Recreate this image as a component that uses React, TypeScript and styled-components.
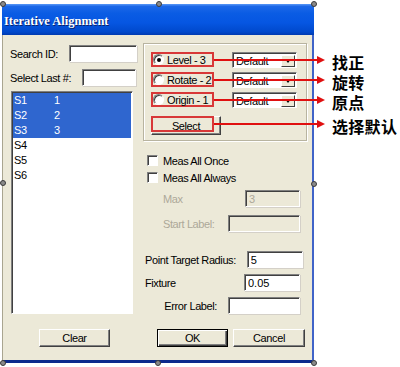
import { Fragment } from "react";
import styled, { createGlobalStyle } from "styled-components";

// Page-wide defaults: white page, Tahoma-like UI text
const GlobalStyle = createGlobalStyle`
  html, body {
    margin: 0;
    padding: 0;
    background: #ffffff;
  }
  body {
    font-family: "Liberation Sans", Arial, sans-serif;
    font-size: 11px;
    letter-spacing: -0.4px;
    color: #000;
  }
`;

// The whole picture: dialog on the left, notes on the right
const Page = styled.div`
  position: relative;
  width: 400px;
  height: 367px;
  overflow: hidden;
  box-sizing: border-box;
  display: flex;
  align-items: flex-start;
  padding: 4px 0 0 2px;
`;

// The dialog window
const Window = styled.div`
  width: 312px;
  height: 359px;
  box-sizing: border-box;
  display: flex;
  flex-direction: column;
  background: #ece9d8;
  border-left: 1px solid #a9a590;
  border-right: 2px solid #4064c8;
  border-bottom: 3px solid #0c2a8c;
  border-radius: 4px 4px 0 0;
`;

const TitleBar = styled.div`
  height: 31px;
  flex: none;
  display: flex;
  align-items: center;
  padding: 4px 0 0 2px;
  box-sizing: border-box;
  margin: 0 -2px 0 -1px;
  border-radius: 4px 4px 0 0;
  background: linear-gradient(
    to bottom,
    #5a98f6 0%,
    #1c68e8 8%,
    #0a5ce4 30%,
    #0656e2 60%,
    #0049cc 90%,
    #003ab0 100%
  );
  color: #fff;
  font-family: "Liberation Serif", "Times New Roman", serif;
  font-weight: bold;
  font-size: 12.5px;
  letter-spacing: 0;
  text-shadow: 1px 1px 0 #0a246e;
`;

// Everything below the title bar
const Body = styled.div`
  flex: 1;
  display: flex;
  flex-direction: column;
  padding: 8px 5px 0 7px;
`;

const Main = styled.div`
  display: flex;
  gap: 10px;
  height: 271px;
`;

const LeftCol = styled.div`
  width: 123px;
  display: flex;
  flex-direction: column;
  padding-top: 2px;
`;

const RightCol = styled.div`
  width: 164px;
  display: flex;
  flex-direction: column;
`;

// label + edit box on one line
const FieldRow = styled.div<{ $top?: number; $indent?: number; $end?: boolean; $pad?: number }>`
  display: flex;
  align-items: center;
  height: 17px;
  flex: none;
  margin-top: ${(p) => p.$top ?? 0}px;
  padding-left: ${(p) => p.$indent ?? 0}px;
  padding-right: ${(p) => p.$pad ?? 7}px;
  justify-content: ${(p) => (p.$end ? "flex-end" : "space-between")};
  gap: 11px;
`;

const Label = styled.span<{ $disabled?: boolean }>`
  white-space: nowrap;
  color: ${(p) => (p.$disabled ? "#aca899" : "#000")};
`;

// sunken edit box
const Field = styled.input<{ $w: number; $disabled?: boolean }>`
  width: ${(p) => p.$w}px;
  height: 17px;
  box-sizing: border-box;
  margin: 0;
  padding: 0 0 0 3px;
  outline: none;
  font: inherit;
  letter-spacing: 0;
  background: ${(p) => (p.$disabled ? "#ece9d8" : "#fff")};
  color: ${(p) => (p.$disabled ? "#aca899" : "#000")};
  border: 1px solid;
  border-color: #808080 #fff #fff #808080;
  box-shadow: inset 1px 1px 0 #404040, 1px 1px 0 #d4d0c8;
`;

// list of sensors
const ListBox = styled.div`
  flex: 1;
  margin: 5px 0 0 1px;
  background: #fff;
  border: 1px solid;
  border-color: #808080 #fff #fff #808080;
  box-shadow: inset 1px 1px 0 #404040;
  padding: 1px 1px 0 1px;
`;

const ListItem = styled.div<{ $selected?: boolean }>`
  display: grid;
  grid-template-columns: 40px 1fr;
  height: 15px;
  line-height: 15px;
  padding-left: 1px;
  background: ${(p) => (p.$selected ? "#2f66cf" : "transparent")};
  color: ${(p) => (p.$selected ? "#fff" : "#000")};
`;

// etched group box holding the radios
const GroupBox = styled.div`
  height: 99px;
  box-sizing: border-box;
  border: 1px solid #b8b4a0;
  box-shadow: inset 1px 1px 0 #fff, 1px 1px 0 #fff;
  padding: 8px 0 0 7px;
  display: grid;
  grid-template-columns: 63px 65px;
  grid-auto-rows: 16px;
  column-gap: 18px;
  row-gap: 4px;
`;

// red annotation frame, with its pointer line running to the note
const RedFrame = styled.div<{ $line: number }>`
  position: relative;
  height: 15px;
  box-sizing: border-box;
  border: 2px solid #d83838;
  display: flex;
  align-items: center;
  gap: 3px;
  &::after {
    content: "";
    position: absolute;
    left: calc(100% + 2px);
    top: calc(50% - 1px);
    width: ${(p) => p.$line}px;
    height: 2px;
    background: #e01010;
    z-index: 3;
  }
`;

const Radio = styled.span<{ $checked?: boolean }>`
  width: 11px;
  height: 11px;
  box-sizing: border-box;
  border-radius: 50%;
  background: #fff;
  border: 1px solid;
  border-color: #808080 #fff #fff #808080;
  box-shadow: inset 1px 1px 0 #404040;
  display: flex;
  align-items: center;
  justify-content: center;
  &::before {
    content: "";
    width: 4px;
    height: 4px;
    border-radius: 50%;
    background: ${(p) => (p.$checked ? "#000" : "transparent")};
  }
`;

const Combo = styled.div`
  width: 65px;
  height: 16px;
  box-sizing: border-box;
  display: flex;
  align-items: center;
  background: #fff;
  border: 1px solid;
  border-color: #808080 #fff #fff #808080;
  box-shadow: inset 1px 1px 0 #404040;
  padding: 1px 1px 0 3px;
`;

const ComboButton = styled.span`
  margin-left: auto;
  width: 14px;
  height: 12px;
  box-sizing: border-box;
  background: #ece9d8;
  border: 1px solid;
  border-color: #fff #404040 #404040 #fff;
  display: flex;
  align-items: center;
  justify-content: center;
  &::before {
    content: "";
    border-top: 4px solid #000;
    border-left: 3.5px solid transparent;
    border-right: 3.5px solid transparent;
  }
`;

// raised push button
const Button = styled.div<{ $w: number; $default?: boolean; $gap?: number }>`
  position: relative;
  width: ${(p) => p.$w}px;
  height: 18px;
  margin-left: ${(p) => p.$gap ?? 0}px;
  box-sizing: border-box;
  display: flex;
  align-items: center;
  justify-content: center;
  background: #ece9d8;
  border: 1px solid;
  border-color: ${(p) => (p.$default ? "#000" : "#fff #404040 #404040 #fff")};
  box-shadow: ${(p) =>
    p.$default
      ? "inset 1px 1px 0 #fff, inset -1px -1px 0 #404040, inset -2px -2px 0 #808080"
      : "inset -1px -1px 0 #808080"};
`;

const SelectButton = styled(Button)`
  grid-column: 1;
  height: 19px;
  margin-top: 4px;
`;

// red frame laid over the Select button
const SelectMark = styled(RedFrame)`
  position: absolute;
  left: -1px;
  top: -1px;
  width: 63px;
  height: 16px;
`;

const CheckRow = styled.div<{ $top: number }>`
  display: flex;
  align-items: center;
  gap: 5px;
  height: 13px;
  margin-top: ${(p) => p.$top}px;
  padding-left: 4px;
`;

const CheckBox = styled.span`
  width: 11px;
  height: 11px;
  box-sizing: border-box;
  background: #fff;
  border: 1px solid;
  border-color: #808080 #fff #fff #808080;
  box-shadow: inset 1px 1px 0 #404040;
`;

const ButtonBar = styled.div`
  display: flex;
  height: 18px;
  margin-top: 15px;
  padding-left: 29px;
`;

// callouts to the right of the dialog
const Notes = styled.div`
  display: flex;
  flex-direction: column;
  margin-left: 3px;
`;

const NoteRow = styled.div<{ $top: number }>`
  display: flex;
  align-items: center;
  gap: 7px;
  height: 20px;
  margin-top: ${(p) => p.$top}px;
`;

const ArrowHead = styled.span`
  width: 0;
  height: 0;
  border-left: 8px solid #e01010;
  border-top: 4px solid transparent;
  border-bottom: 4px solid transparent;
`;

const NoteText = styled.span`
  font-family: "Noto Sans CJK SC", "Noto Sans", sans-serif;
  font-weight: bold;
  font-size: 16px;
  letter-spacing: 0.3px;
  line-height: 16px;
  margin-top: 4px;
`;

// selection handles of the screenshot editor
const Handle = styled.span<{ $x: number; $y: number }>`
  position: absolute;
  left: ${(p) => p.$x - 3}px;
  top: ${(p) => p.$y - 3}px;
  width: 6px;
  height: 6px;
  box-sizing: border-box;
  border-radius: 50%;
  background: #8a8a8a;
  border: 1px solid #3a3a3a;
  z-index: 5;
`;

const rows = [
  { name: "S1", num: "1", sel: true },
  { name: "S2", num: "2", sel: true },
  { name: "S3", num: "3", sel: true },
  { name: "S4", num: "", sel: false },
  { name: "S5", num: "", sel: false },
  { name: "S6", num: "", sel: false },
];

const radios = [
  { label: "Level - 3", checked: true },
  { label: "Rotate - 2", checked: false },
  { label: "Origin - 1", checked: false },
];

const notes = [
  { text: "找正", top: 46 },
  { text: "旋转", top: 0 },
  { text: "原点", top: 0 },
  { text: "选择默认", top: 4 },
];

const handles = [
  [3, 4], [159, 4], [314, 4],
  [3, 183], [314, 184],
  [3, 363], [158, 363], [314, 363],
];

const App = () => {
  return (
    <Page>
      <GlobalStyle />
      <Window>
        <TitleBar>Iterative Alignment</TitleBar>
        <Body>
          <Main>
            <LeftCol>
              <FieldRow $pad={0}>
                <Label>Search ID:</Label>
                <Field $w={68} readOnly value="" />
              </FieldRow>
              <FieldRow $top={7} $pad={0}>
                <Label>Select Last #:</Label>
                <Field $w={54} readOnly value="" />
              </FieldRow>
              <ListBox>
                {rows.map((r) => (
                  <ListItem key={r.name} $selected={r.sel}>
                    <span>{r.name}</span>
                    <span>{r.num}</span>
                  </ListItem>
                ))}
              </ListBox>
            </LeftCol>

            <RightCol>
              <GroupBox>
                {radios.map((r) => (
                  <Fragment key={r.label}>
                    <RedFrame $line={103}>
                      <Radio $checked={r.checked} />
                      <span>{r.label}</span>
                    </RedFrame>
                    <Combo>
                      Default
                      <ComboButton />
                    </Combo>
                  </Fragment>
                ))}
                <SelectButton $w={70}>
                  Select
                  <SelectMark $line={103} />
                </SelectButton>
              </GroupBox>

              <CheckRow $top={13}>
                <CheckBox />
                <span>Meas All Once</span>
              </CheckRow>
              <CheckRow $top={4}>
                <CheckBox />
                <span>Meas All Always</span>
              </CheckRow>

              <FieldRow $top={6} $indent={20}>
                <Label $disabled>Max</Label>
                <Field $w={55} $disabled readOnly value="3" />
              </FieldRow>
              <FieldRow $top={8} $indent={20}>
                <Label $disabled>Start Label:</Label>
                <Field $w={72} $disabled readOnly value="" />
              </FieldRow>

              <FieldRow $top={19} $indent={2}>
                <Label>Point Target Radius:</Label>
                <Field $w={56} readOnly value="5" />
              </FieldRow>
              <FieldRow $top={6} $indent={2}>
                <Label>Fixture</Label>
                <Field $w={56} readOnly value="0.05" />
              </FieldRow>
              <FieldRow $top={6} $end>
                <Label>Error Label:</Label>
                <Field $w={72} readOnly value="" />
              </FieldRow>
            </RightCol>
          </Main>

          <ButtonBar>
            <Button $w={71}>Clear</Button>
            <Button $w={71} $default $gap={47}>
              OK
            </Button>
            <Button $w={72} $gap={5}>
              Cancel
            </Button>
          </ButtonBar>
        </Body>
      </Window>

      <Notes>
        {notes.map((n) => (
          <NoteRow key={n.text} $top={n.top}>
            <ArrowHead />
            <NoteText>{n.text}</NoteText>
          </NoteRow>
        ))}
      </Notes>

      {handles.map(([x, y]) => (
        <Handle key={`${x}-${y}`} $x={x} $y={y} />
      ))}
    </Page>
  );
};

export default App;
